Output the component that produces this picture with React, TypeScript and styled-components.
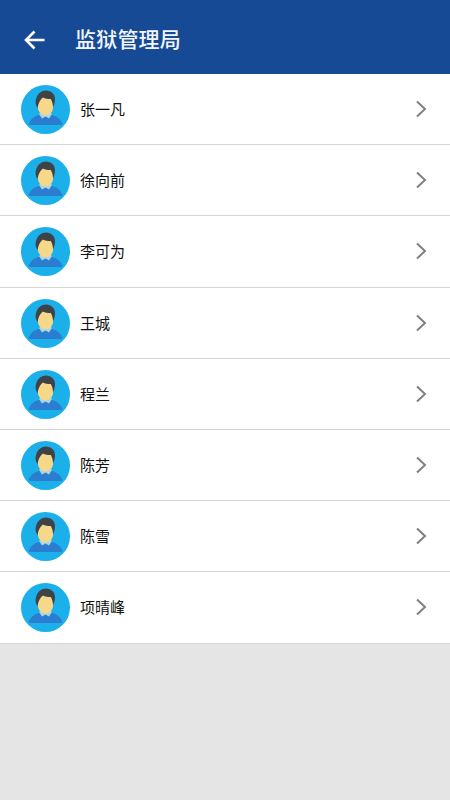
import styled, { createGlobalStyle } from "styled-components";

const people = ["张一凡", "徐向前", "李可为", "王城", "程兰", "陈芳", "陈雪", "项晴峰"];

function Avatar() {
  return (
    <AvatarSvg viewBox="0 0 49 49">
      <circle cx="24.5" cy="24.5" r="24.5" fill="#1cb0ea" />
      <path d="M7.500 39c1.500-4.500 5-7.500 10-9h14c5 1.500 8.500 4.500 10 9-.5.800-1 1-2 1H9.500c-1 0-1.500-.2-2-1z" fill="#2b7dd0" />
      <path d="M18 29l2.500-2h8l2.500 2-3 4.500-3.500-2-3.500 2z" fill="#a9d5ea" />
      <path d="M17 12h15v11c0 4-4 7.500-7.500 7.500S17 27 17 23z" fill="#f6d888" />
      <path d="M16.500 23c-2.300-3-2.500-7-1-10.500C17 8.500 20.500 5.500 25 5.500c5 0 9 3.500 9 8.500 0 3-.5 5-2 8-.2-3-.7-5.500-2.200-8-3.300 0-5.800-.4-8-1.500-2.800 2.500-4.300 5.500-5.300 10.500z" fill="#3f4348" />
    </AvatarSvg>
  );
}

function App() {
  return (
    <Page>
      <GlobalStyle />
      <Header>
        <BackIcon viewBox="0 0 24 24">
          <path d="M21.500 12H3.500M11.500 3.500L3 12l8.500 8.500" />
        </BackIcon>
        <Title>监狱管理局</Title>
      </Header>
      <List>
        {people.map((name) => (
          <Row key={name}>
            <Avatar />
            <Name>{name}</Name>
            <Chevron viewBox="0 0 12 18">
              <path d="M2 1.500L10 9l-8 7.500" />
            </Chevron>
          </Row>
        ))}
      </List>
    </Page>
  );
}

const GlobalStyle = createGlobalStyle`
  html, body {
    margin: 0;
    padding: 0;
    background: #e5e5e5;
  }
`;
const Page = styled.div`
  width: 450px;
  height: 800px;
  overflow: hidden;
  background: #e5e5e5;
  font-family: "Noto Sans CJK SC", "Noto Sans", sans-serif;
`;
const Header = styled.header`
  display: flex;
  align-items: center;
  height: 74px;
  padding-left: 23px;
  box-sizing: border-box;
  background: #164a94;
`;
const BackIcon = styled.svg`
  width: 24px;
  height: 24px;
  margin-right: 28px;
  margin-top: 5px;
  fill: none;
  stroke: #fff;
  stroke-width: 2.6;
`;
const Title = styled.h1`
  margin: 0 0 -1px;
  font-size: 21px;
  font-weight: 500;
  letter-spacing: 0.2px;
  color: #f2f5fa;
`;
const List = styled.ul`
  margin: 0;
  padding: 0;
  list-style: none;
`;
const Row = styled.li`
  display: flex;
  align-items: center;
  height: 71.2px;
  box-sizing: border-box;
  padding: 0 23px 0 21px;
  background: #fff;
  border-bottom: 1px solid #d4d4d4;
`;
const AvatarSvg = styled.svg`
  flex: none;
  width: 49px;
  height: 49px;
  margin-top: 1px;
`;
const Name = styled.span`
  flex: 1;
  margin: 0 0 1px 10px;
  font-size: 15px;
  color: #111;
`;
const Chevron = styled.svg`
  width: 12px;
  height: 18px;
  fill: none;
  stroke: #808080;
  stroke-width: 2;
`;

export default App;
